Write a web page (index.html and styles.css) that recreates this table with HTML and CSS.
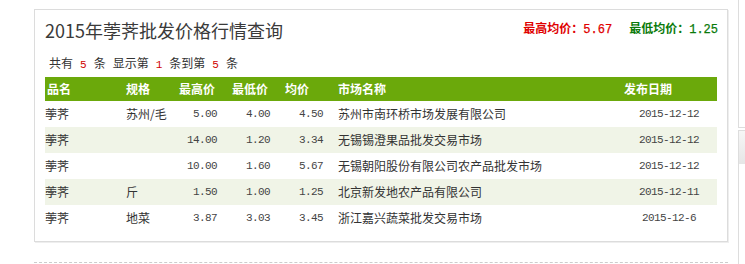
FILE: index.html
```html
<!DOCTYPE html>
<html lang="zh-CN">
<head>
<meta charset="utf-8">
<title>2015年荸荠批发价格行情查询</title>
<link rel="stylesheet" href="styles.css">
</head>
<body>
<div class="page">
  <div class="main">
    <div class="panel">
      <div class="panel-head">
        <h1 class="title">2015年荸荠批发价格行情查询</h1>
        <div class="summary">
          <span class="sum-high">最高均价：<span class="mono">5.67</span></span>
          <span class="sum-low">最低均价：<span class="mono">1.25</span></span>
        </div>
      </div>
      <div class="info">共有<span class="num">5</span>条<span class="sp"></span>显示第<span class="num">1</span>条到第<span class="num">5</span>条</div>
      <table class="grid">
        <colgroup>
          <col class="c-name"><col class="c-spec"><col class="c-p"><col class="c-p"><col class="c-p"><col class="c-market"><col class="c-date">
        </colgroup>
        <thead>
          <tr><th class="first">品名</th><th>规格</th><th>最高价</th><th>最低价</th><th>均价</th><th>市场名称</th><th>发布日期</th></tr>
        </thead>
        <tbody>
          <tr><td class="first">荸荠</td><td>苏州/毛</td><td class="n">5.00</td><td class="n">4.00</td><td class="n">4.50</td><td>苏州市南环桥市场发展有限公司</td><td class="d">2015-12-12</td></tr>
          <tr class="alt"><td class="first">荸荠</td><td></td><td class="n">14.00</td><td class="n">1.20</td><td class="n">3.34</td><td>无锡锡澄果品批发交易市场</td><td class="d">2015-12-12</td></tr>
          <tr><td class="first">荸荠</td><td></td><td class="n">10.00</td><td class="n">1.60</td><td class="n">5.67</td><td>无锡朝阳股份有限公司农产品批发市场</td><td class="d">2015-12-12</td></tr>
          <tr class="alt"><td class="first">荸荠</td><td>斤</td><td class="n">1.50</td><td class="n">1.00</td><td class="n">1.25</td><td>北京新发地农产品有限公司</td><td class="d">2015-12-11</td></tr>
          <tr><td class="first">荸荠</td><td>地菜</td><td class="n">3.87</td><td class="n">3.03</td><td class="n">3.45</td><td>浙江嘉兴蔬菜批发交易市场</td><td class="d">2015-12-6</td></tr>
        </tbody>
      </table>
    </div>
    <div class="dashed"></div>
  </div>
  <div class="side">
    <div class="side-box top"></div>
    <div class="side-box second"><div class="side-head"></div></div>
  </div>
</div>
</body>
</html>
```
FILE: styles.css
```css
html, body {
  margin: 0;
  padding: 0;
  background: #fff;
  overflow: hidden;
}
body {
  font-family: "Noto Sans CJK SC", "Liberation Sans", sans-serif;
  font-size: 12px;
  color: #333;
}
.page {
  display: flex;
  align-items: flex-start;
  width: 745px;
  height: 264px;
  overflow: hidden;
}
.main {
  margin-left: 34px;
  margin-top: 9px;
  width: 694px;
  flex: none;
}
.panel {
  border: 1px solid #dcdcdc;
  box-shadow: 1px 1px 0 #eeeeee;
  padding: 0 10px 10px 10px;
}
.panel-head {
  display: flex;
  justify-content: space-between;
  align-items: center;
  height: 40px;
}
.title {
  margin: 0;
  font-size: 18px;
  font-weight: normal;
  color: #3a3a3a;
  line-height: 40px;
}
.summary {
  display: flex;
  gap: 17px;
  font-weight: bold;
  font-size: 12px;
  margin-top: -5px;
  margin-right: -1px;
}
.sum-high { color: #e00000; }
.sum-low { color: #0a7a0a; }
.mono {
  font-family: "Liberation Mono", monospace;
  font-size: 12px;
  font-weight: normal;
  -webkit-text-stroke: 0.25px currentColor;
}
.info {
  margin-top: 4px;
  margin-left: 4px;
  height: 18px;
  line-height: 18px;
  color: #333;
}
.info .num {
  display: inline-block;
  margin: 0 7px;
  color: #d00000;
  font-family: "Liberation Mono", monospace;
  font-size: 11px;
}
.info .sp {
  display: inline-block;
  width: 7px;
}
.grid {
  margin-top: 5px;
  width: 672px;
  border-collapse: collapse;
  table-layout: fixed;
}
.c-name { width: 78px; }
.c-spec { width: 53px; }
.c-p { width: 53px; }
.c-market { width: 286px; }
.c-date { width: 96px; }
.grid th {
  background: #6ba90b;
  color: #fff;
  font-weight: bold;
  text-align: left;
  height: 24px;
  padding: 0 3px;
  line-height: 24px;
}
.grid th.first { padding-left: 2px; }
.grid td {
  height: 26px;
  padding: 0 3px;
  line-height: 26px;
  color: #333;
  white-space: nowrap;
}
.grid td.first { padding-left: 0; }
.grid td.n,
.grid td.d {
  font-family: "Liberation Mono", monospace;
  font-size: 11px;
  letter-spacing: -0.6px;
  color: #444;
}
.grid td.n {
  text-align: right;
  padding-right: 12px;
}
.grid td.d { text-align: center; }
.grid tr.alt td { background: #f0f4e7; }
.dashed {
  margin-top: 20px;
  border-top: 1px dashed #cccccc;
  height: 4px;
}
.side {
  margin-left: 10px;
  flex: 1;
  display: flex;
  flex-direction: column;
  margin-top: -2px;
}
.side-box {
  border: 1px solid #dddddd;
  border-right: none;
}
.side-box.top { height: 128px; }
.side-box.second {
  margin-top: 2px;
  height: 200px;
}
.side-head {
  height: 33px;
  background: linear-gradient(#f6f6f6, #e6e6e6);
}
```
